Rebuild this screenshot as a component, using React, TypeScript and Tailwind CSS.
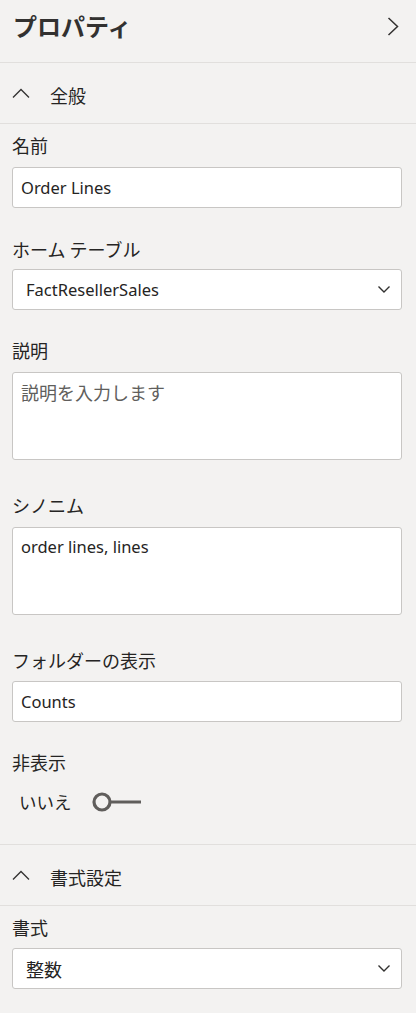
const JP = { fontFamily: '"Noto Sans CJK JP", "Noto Sans", sans-serif' };
const LATIN = { fontFamily: '"Noto Sans", "Noto Sans CJK JP", sans-serif' };

function clsx(...args: (string | false | undefined)[]) {
  return args.filter(Boolean).join(' ');
}

function Label({ children, className = '' }: { children: React.ReactNode; className?: string }) {
  return (
    <div className={`h-6 flex items-center text-[18px] leading-6 text-[#252423] ${className}`} style={JP}>
      {children}
    </div>
  );
}

function ChevronDownIcon() {
  return (
    <svg width="14" height="9" viewBox="0 0 14 9" className="shrink-0">
      <polyline points="1.5,1.5 7,7 12.5,1.5" fill="none" stroke="#323130" strokeWidth="1.4" />
    </svg>
  );
}

function Box({
  children,
  tall = false,
  latin = false,
  select = false,
  muted = false,
}: {
  children: React.ReactNode;
  tall?: boolean;
  latin?: boolean;
  select?: boolean;
  muted?: boolean;
}) {
  return (
    <div
      className={clsx(
        'ml-3 mr-[14px] bg-white border border-[#c8c6c4] rounded-[3px] flex',
        tall ? 'h-[88px] items-start pt-[7px]' : 'h-[41px] items-center',
        select ? 'pl-[13px] pr-[10px] justify-between' : 'px-[8px]'
      )}
    >
      <span
        className={clsx(
          latin ? 'text-[16.5px]' : 'text-[18px]',
          'leading-6',
          muted ? 'text-[#605e5c]' : 'text-[#252423]'
        )}
        style={latin ? LATIN : JP}
      >
        {children}
      </span>
      {select && <ChevronDownIcon />}
    </div>
  );
}

function SectionHeader({ title }: { title: string }) {
  return (
    <div className="h-[61px] flex items-center pl-[12px] border-b border-[#e1dfdd]">
      <svg width="18" height="11" viewBox="0 0 18 11" className="shrink-0">
        <polyline points="1,9.5 9,1.5 17,9.5" fill="none" stroke="#323130" strokeWidth="1.3" />
      </svg>
      <span className="ml-[20px] text-[18px] leading-6 text-[#252423] pt-[4px]" style={JP}>
        {title}
      </span>
    </div>
  );
}

export default function App() {
  return (
    <div className="w-[416px] min-h-[1013px] bg-[#f3f2f1]">
      {/* Header */}
      <div className="h-[63px] flex items-center justify-between pl-[13px] pr-[17px] pb-[10px] border-b border-[#e1dfdd]">
        <h1 className="text-[24px] font-bold leading-8 text-[#323130]" style={JP}>
          プロパティ
        </h1>
        <svg width="12" height="19" viewBox="0 0 12 19" className="shrink-0">
          <polyline points="1.5,1 10.5,9.5 1.5,18" fill="none" stroke="#323130" strokeWidth="1.5" />
        </svg>
      </div>

      <SectionHeader title="全般" />

      <div className="pt-[9px]">
        <Label className="px-3 mb-[10px]">名前</Label>
        <Box latin>Order Lines</Box>

        <Label className="px-3 mt-[29px] mb-[8px]">ホーム テーブル</Label>
        <Box latin select>
          FactResellerSales
        </Box>

        <Label className="px-3 mt-[28px] mb-[10px]">説明</Label>
        <Box tall muted>
          説明を入力します
        </Box>

        <Label className="px-3 mt-[33px] mb-[10px]">シノニム</Label>
        <Box tall latin>
          order lines, lines
        </Box>

        <Label className="px-3 mt-[33px] mb-[9px]">フォルダーの表示</Label>
        <Box latin>Counts</Box>

        <Label className="px-3 mt-[28px]">非表示</Label>
        <div className="h-[40px] mt-[8px] flex items-center pl-[19px]">
          <span className="text-[17.5px] leading-6 text-[#252423]" style={JP}>
            いいえ
          </span>
          <svg width="50" height="22" viewBox="0 0 50 22" className="ml-[20px]">
            <circle cx="10" cy="11" r="8" fill="none" stroke="#605e5c" strokeWidth="3.2" />
            <line x1="18" y1="11" x2="49" y2="11" stroke="#605e5c" strokeWidth="3" />
          </svg>
        </div>
      </div>

      <div className="mt-[22px] border-t border-[#e1dfdd]">
        <SectionHeader title="書式設定" />
      </div>

      <div className="pt-[9px] pb-[23px]">
        <Label className="px-3 mb-[9px]">書式</Label>
        <Box select>整数</Box>
      </div>
    </div>
  );
}
